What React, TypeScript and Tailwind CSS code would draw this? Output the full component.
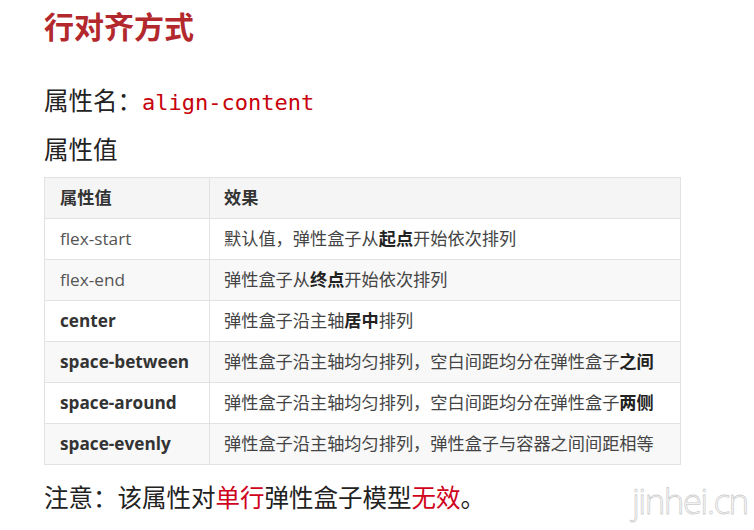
import React from "react";

const rows: { k: string; kb?: boolean; v: React.ReactNode }[] = [
  { k: "flex-start", v: <>默认值，弹性盒子从<b className="font-bold text-[#222]">起点</b>开始依次排列</> },
  { k: "flex-end", v: <>弹性盒子从<b className="font-bold text-[#222]">终点</b>开始依次排列</> },
  { k: "center", kb: true, v: <>弹性盒子沿主轴<b className="font-bold text-[#222]">居中</b>排列</> },
  { k: "space-between", kb: true, v: <>弹性盒子沿主轴均匀排列，空白间距均分在弹性盒子<b className="font-bold text-[#222]">之间</b></> },
  { k: "space-around", kb: true, v: <>弹性盒子沿主轴均匀排列，空白间距均分在弹性盒子<b className="font-bold text-[#222]">两侧</b></> },
  { k: "space-evenly", kb: true, v: <>弹性盒子沿主轴均匀排列，弹性盒子与容器之间间距相等</> },
];

export default function App() {
  return (
    <div className="w-[754px] h-[530px] bg-white overflow-hidden relative font-['Open_Sans','Noto_Sans_CJK_SC',sans-serif] text-[#222]">
      <div className="pl-[44px]">
        <h1 className="mt-[7px] text-[30px] leading-[40px] font-bold text-[#b3282d]">行对齐方式</h1>
        <p className="mt-[38px] text-[24.5px] leading-[32px] text-[#222]">
          属性名：<span className="font-['DejaVu_Sans_Mono','Liberation_Mono',monospace] text-[22px] text-[#c7000b]">align-content</span>
        </p>
        <p className="mt-[15px] text-[24.5px] leading-[32px] text-[#222]">属性值</p>
        <table className="mt-[11px] w-[637px] border-collapse text-[17.2px] leading-[24px] text-[#333]">
          <thead>
            <tr className="bg-[#f5f5f5]">
              <th className="w-[165px] border border-[#e2e2e2] px-[15px] py-[8px] text-left font-bold">属性值</th>
              <th className="border border-[#e2e2e2] px-[14px] py-[8px] text-left font-bold">效果</th>
            </tr>
          </thead>
          <tbody>
            {rows.map((r, i) => (
              <tr key={r.k} className={i % 2 === 0 ? "bg-white" : "bg-[#f8f8f8]"}>
                <td className={"border border-[#e2e2e2] px-[15px] py-[8px] " + (r.kb ? "font-bold text-[#333]" : "text-[#555]")}>{r.k}</td>
                <td className="border border-[#e2e2e2] px-[14px] py-[8px] text-[#444]">{r.v}</td>
              </tr>
            ))}
          </tbody>
        </table>
        <p className="mt-[17px] text-[24.5px] leading-[32px] text-[#222]">
          注意：该属性对<span className="text-[#d0021b]">单行</span>弹性盒子模型<span className="text-[#d0021b]">无效</span>。
        </p>
      </div>
      <div className="absolute left-[632px] top-[479px] text-[35px] leading-[44px] font-light font-['Open_Sans',sans-serif] text-transparent [-webkit-text-stroke:0.8px_#cfcfcf] tracking-[-1.6px]">
        jinhei.cn
      </div>
    </div>
  );
}
